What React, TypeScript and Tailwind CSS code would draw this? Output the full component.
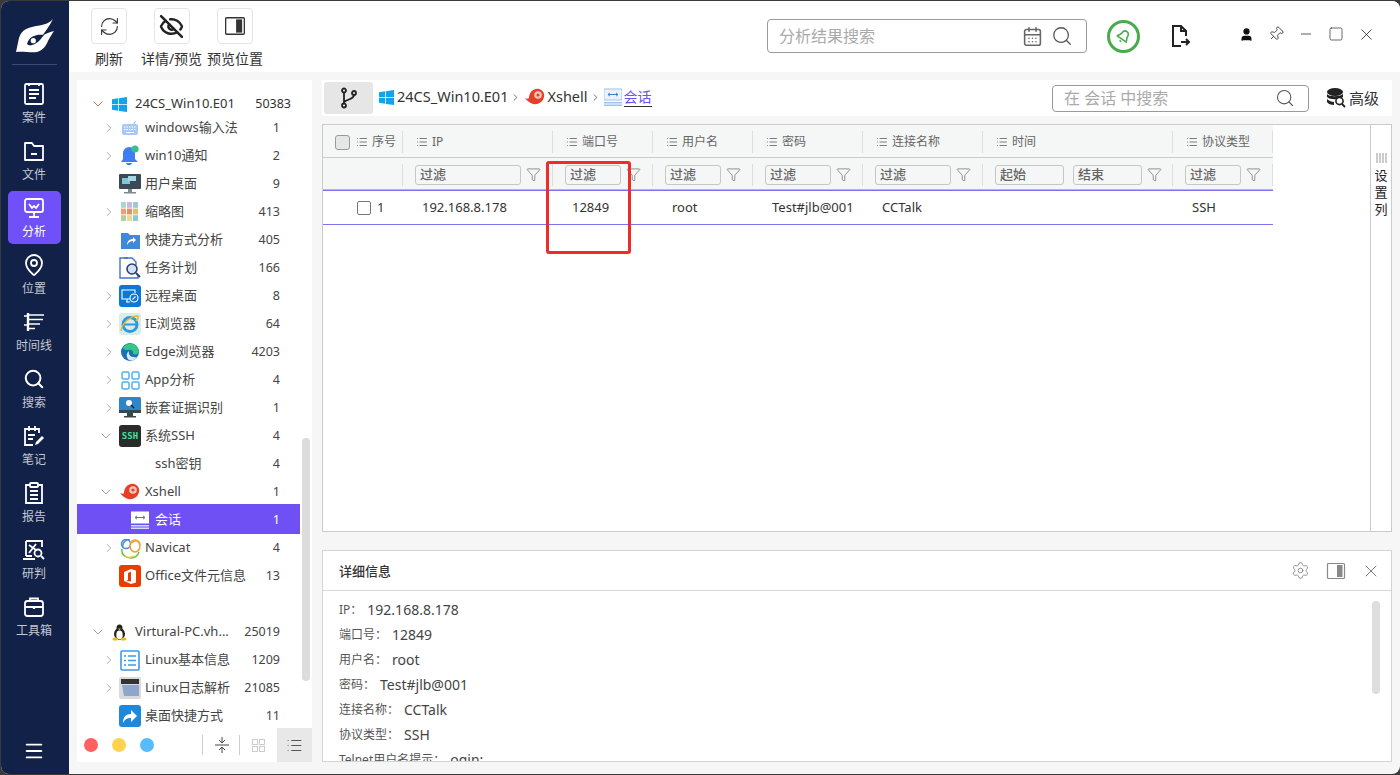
import React from "react";
import { MapPin, Search, Settings, X, Minus, Square, User, Pin, CalendarDays, Filter, RefreshCw, EyeOff, Menu, ChevronRight, ChevronDown, List } from "lucide-react";

const font = "[font-family:'Noto_Sans','Noto_Sans_CJK_SC',sans-serif]";

function Logo() {
  return (
    <svg width="39" height="36" viewBox="0 0 39 36">
      <path d="M38 1 C33 7 25 7 17 9 C9 11 6 14 4 20 L1 34 C8 33 16 35 22 34 C28 32 31 28 33 23 C35 19 37 16 39 13 C34 14 30 16 27 18 C30 14 34 9 38 1 Z" fill="#fff" />
      <path d="M12 26 C14 18 22 16 29 17 C26 21 22 26 17 27 C15 28 13 27 12 26 Z" fill="#122147" />
      <circle cx="18.3" cy="22.7" r="2.6" fill="#fff" />
    </svg>
  );
}

const navStroke = { fill: "none", stroke: "#fff", strokeWidth: 1.8 };

function CaseIcon() {
  return (
    <svg width="22" height="24" viewBox="0 0 22 24" {...navStroke}>
      <rect x="2" y="2" width="18" height="20" rx="1.5" />
      <path d="M6 1v3M16 1v3M6 8h10M6 12h10M6 16h7" />
    </svg>
  );
}
function FolderIcon() {
  return (
    <svg width="24" height="22" viewBox="0 0 24 22" {...navStroke}>
      <path d="M3 3h7l2 3h9v14H3z" strokeLinejoin="round" />
      <path d="M9 14h6" />
    </svg>
  );
}
function TimelineIcon() {
  return (
    <svg width="22" height="18" viewBox="0 0 22 18" fill="none" stroke="#fff" strokeWidth="2">
      <path d="M5 0v18" strokeWidth="2.4" />
      <path d="M1 3h4M1 12h4" strokeWidth="1.4" />
      <path d="M6 2h15M6 6.5h14M6 11h11M6 15.5h6" strokeWidth="1.6" />
    </svg>
  );
}
function AnalysisIcon() {
  return (
    <svg width="22" height="22" viewBox="0 0 22 22" fill="none" stroke="#fff" strokeWidth="1.8">
      <rect x="2" y="2" width="18" height="13" rx="2" />
      <path d="M6 7l3 4 2-2 2 2 3-4M11 15v4M6 20h10" />
    </svg>
  );
}
function NoteIcon() {
  return (
    <svg width="22" height="22" viewBox="0 0 22 22" fill="none" stroke="#fff" strokeWidth="1.8">
      <path d="M16 8V4H2v16h8" />
      <path d="M6 1v5M12 1v5M5 10h7M5 14h5" />
      <path d="M12 20l1-3 6-6 2 2-6 6z" fill="#fff" stroke="none" />
    </svg>
  );
}
function ReportIcon() {
  return (
    <svg width="20" height="24" viewBox="0 0 20 24" {...navStroke}>
      <path d="M6 4H2v18h16V4h-4" />
      <rect x="6" y="2" width="8" height="4" rx="1" />
      <path d="M6 10h8M6 14h8M6 18h8" />
    </svg>
  );
}
function JudgeIcon() {
  return (
    <svg width="22" height="22" viewBox="0 0 22 22" fill="none" stroke="#fff" strokeWidth="1.8">
      <path d="M3 2h16v6M3 2v15M0 20h12M9 17H3" />
      <path d="M6 6l7 5M13 5l-7 9" />
      <circle cx="15" cy="14" r="3.5" />
      <path d="M18 17l3 3" />
    </svg>
  );
}
function ToolboxIcon() {
  return (
    <svg width="22" height="22" viewBox="0 0 22 22" {...navStroke}>
      <rect x="2" y="5" width="18" height="15" rx="2.5" />
      <path d="M7 5V2.5h8V5M2 11h18" />
      <path d="M11 10v3" strokeWidth="2.2" />
    </svg>
  );
}

const navItems = [
  { label: "案件", icon: <CaseIcon /> },
  { label: "文件", icon: <FolderIcon /> },
  { label: "分析", icon: <AnalysisIcon />, active: true },
  { label: "位置", icon: <MapPin size={24} strokeWidth={1.8} color="#fff" /> },
  { label: "时间线", icon: <TimelineIcon /> },
  { label: "搜索", icon: <Search size={22} strokeWidth={2.2} color="#fff" /> },
  { label: "笔记", icon: <NoteIcon /> },
  { label: "报告", icon: <ReportIcon /> },
  { label: "研判", icon: <JudgeIcon /> },
  { label: "工具箱", icon: <ToolboxIcon /> },
];

function WinIcon({ size = 15 }: { size?: number }) {
  return (
    <svg width={size} height={size} viewBox="0 0 16 16" fill="#10a5ea">
      <path d="M0 2.3l6.6-.9v6.2H0zM7.4 1.3L16 0v7.6H7.4zM0 8.4h6.6v6.2L0 13.7zM7.4 8.4H16V16l-8.6-1.2z" />
    </svg>
  );
}
function Snail({ size = 22 }: { size?: number }) {
  return (
    <svg width={size} height={size} viewBox="0 0 22 22" fill="none">
      <path d="M1 12c2 1 3 1 4 0 0-6 5-10 10-9 4 1 6 5 5 8-1 5-6 8-11 7-3-1-6-3-8-6z" fill="#e6402a" />
      <circle cx="14" cy="9" r="4.5" fill="#f6c8b8" stroke="#e6402a" strokeWidth="1.4" />
      <circle cx="14" cy="9" r="1.6" fill="#e6402a" />
    </svg>
  );
}
const Box = ({ children, cls }: { children?: React.ReactNode; cls: string }) => (
  <div className={`flex h-[22px] w-[22px] items-center justify-center ${cls}`}>{children}</div>
);
function ChatScreen({ light }: { light?: boolean }) {
  return (
    <svg width="18" height="18" viewBox="0 0 18 18">
      <rect x="0" y="1" width="18" height="11" fill={light ? "#fff" : "#eaf3fc"} stroke={light ? "#fff" : "#9cc4ea"} />
      <path d="M4 6.5h10M4 6.5l2-1.7M4 6.5l2 1.7M14 6.5l-2-1.7M14 6.5l-2 1.7" stroke="#3d7fc9" fill="none" />
      <rect x="0" y="14" width="18" height="1.5" fill={light ? "#cfe0f5" : "#9cc4ea"} />
      <rect x="0" y="16.5" width="18" height="1.5" fill={light ? "#cfe0f5" : "#9cc4ea"} />
    </svg>
  );
}

const icons: Record<string, React.ReactNode> = {
  kbd: (
    <svg width="18" height="16" viewBox="0 0 18 16">
      <path d="M13 4c0-2 1-2 2-3" stroke="#88b4ea" fill="none" />
      <rect x="1" y="4" width="16" height="11" rx="2" fill="#a9c9f2" />
      <path d="M3 7h12M3 9.5h12" stroke="#fff" strokeDasharray="1.5 1" />
      <path d="M5 12.5h8" stroke="#fff" />
    </svg>
  ),
  bell: (
    <svg width="20" height="22" viewBox="0 0 20 22">
      <path d="M9 2c4 0 6 3 6 7v5l3 3H1l2-3V8c0-3 3-6 6-6z" fill="#3f7df5" />
      <path d="M6 18c1 3 5 3 6 0z" fill="#3f7df5" />
      <circle cx="15" cy="4" r="3.6" fill="#35c08e" />
    </svg>
  ),
  desk: (
    <svg width="22" height="20" viewBox="0 0 22 20">
      <rect x="0" y="0" width="22" height="15" rx="1" fill="#3b4a55" />
      <rect x="3" y="4" width="8" height="6" fill="#7ec7d8" />
      <rect x="9" y="2" width="8" height="5" fill="#a7d5e4" />
      <rect x="9" y="15" width="4" height="3" fill="#7d8a92" />
      <rect x="5" y="18" width="12" height="1.5" fill="#7d8a92" />
    </svg>
  ),
  thumb: (
    <svg width="18" height="20" viewBox="0 0 18 20">
      {["#a8d5d8", "#c8b8e0", "#9cc8d8", "#f0a070", "#e09070", "#e0c070", "#b0d0a0", "#e0e090", "#90c8d8"].map((c, i) => (
        <rect key={i} x={(i % 3) * 6} y={Math.floor(i / 3) * 6.6} width="5" height="5.8" fill={c} />
      ))}
    </svg>
  ),
  shortcut: (
    <svg width="19" height="19" viewBox="0 0 19 19">
      <path d="M0 2h7l2 2h10v14H0z" fill="#3f88dc" />
      <path d="M6 14c0-4 3-6 6-6V6l3 3-3 3v-2c-3 0-4 1-6 4z" fill="#fff" />
    </svg>
  ),
  task: (
    <svg width="22" height="22" viewBox="0 0 22 22" fill="none">
      <path d="M9 1H1v20h18v-3" stroke="#3f78c8" strokeWidth="1.4" />
      <path d="M5 1h8l4 4v3" stroke="#3f78c8" strokeWidth="1.4" />
      <circle cx="13" cy="12" r="5" fill="#cfe2f8" stroke="#2c3e6b" strokeWidth="1.6" />
      <path d="M17 16l4 4" stroke="#2c3e6b" strokeWidth="2" />
    </svg>
  ),
  remote: (
    <Box cls="rounded-[3px] bg-[#0a78d6]">
      <svg width="18" height="16" viewBox="0 0 18 16" fill="none" stroke="#fff" strokeWidth="1.1">
        <path d="M9 11H1V2h13v3M5 14h4M6 11v3" />
        <circle cx="13" cy="10" r="4" />
        <path d="M11.5 11.5l3-3" />
      </svg>
    </Box>
  ),
  ie: (
    <Box cls="rounded-[3px] bg-[#d9ecec]">
      <svg width="20" height="20" viewBox="0 0 20 20" fill="none">
        <circle cx="10" cy="10.5" r="7" stroke="#2a9ade" strokeWidth="3" />
        <path d="M4 10.5h12" stroke="#2a9ade" strokeWidth="2" />
        <path d="M1 17C2 9 10 2 18 2c1 2-1 4-2 5" stroke="#f0b429" strokeWidth="1.4" />
      </svg>
    </Box>
  ),
  edge: (
    <svg width="20" height="20" viewBox="0 0 20 20">
      <circle cx="10" cy="10" r="9" fill="#1b6fb8" />
      <path d="M3 6c3-6 14-6 16 3 0 3-3 4-6 3 1-3-2-5-5-4-2 0-4 0-5-2z" fill="#37c68a" />
      <path d="M9 18c-3-2-3-7 0-9-1 4 2 7 8 6-2 3-5 4-8 3z" fill="#fff" opacity=".85" />
    </svg>
  ),
  app: (
    <svg width="19" height="19" viewBox="0 0 19 19" fill="none" stroke="#4fb2ec" strokeWidth="1.5">
      <rect x="1" y="1" width="7" height="7" rx="1.5" />
      <rect x="11" y="1" width="7" height="7" rx="1.5" />
      <rect x="1" y="11" width="7" height="7" rx="1.5" />
      <rect x="11" y="11" width="7" height="7" rx="1.5" />
    </svg>
  ),
  nest: (
    <svg width="22" height="22" viewBox="0 0 22 22">
      <rect x="0" y="0" width="22" height="16" rx="1.5" fill="#2d86c9" />
      <rect x="0" y="13" width="22" height="3" fill="#37474f" />
      <circle cx="10" cy="6" r="3" fill="#fff" />
      <path d="M12 8l3 3" stroke="#222" strokeWidth="1.6" />
      <rect x="8" y="16" width="6" height="3" fill="#37474f" />
      <rect x="5" y="19" width="12" height="1.5" fill="#37474f" />
    </svg>
  ),
  ssh: (
    <Box cls="rounded-[3px] bg-[#2b2b2b]">
      <span className="text-[9px] font-bold leading-none text-[#3fe0a0] [font-family:'DejaVu_Sans_Mono',monospace]">SSH</span>
    </Box>
  ),
  snail: <Snail />,
  chat: <ChatScreen light />,
  navicat: (
    <svg width="21" height="21" viewBox="0 0 21 21" fill="none" strokeWidth="1.5">
      <path d="M10 2C5 1 2 5 3 10" stroke="#4a90e2" />
      <circle cx="6" cy="6" r="4.5" stroke="#4a90e2" />
      <path d="M12 5c3-4 8-2 8 2" stroke="#f0a030" />
      <ellipse cx="15" cy="8" rx="5" ry="6" stroke="#f0a030" />
      <path d="M2 11c-1 6 4 9 9 9s7-3 8-6" stroke="#6cc04a" />
      <path d="M5 18c3 2 6 2 9 0" stroke="#e8c830" />
    </svg>
  ),
  office: (
    <Box cls="rounded-[3px] bg-[#eb3c00]">
      <svg width="14" height="15" viewBox="0 0 14 15" fill="#fff">
        <path d="M8 0L1 3v9l7 3 5-1.5V1.5zM8 2.5v10L3 12l2-1V4z" />
      </svg>
    </Box>
  ),
  tux: (
    <svg width="15" height="17" viewBox="0 0 15 17">
      <ellipse cx="7.5" cy="10" rx="5.5" ry="6" fill="#222" />
      <ellipse cx="7.5" cy="4" rx="3" ry="3.6" fill="#222" />
      <ellipse cx="7.5" cy="11" rx="3.2" ry="4.4" fill="#fff" />
      <path d="M6 4.5h3L7.5 6.2z" fill="#f0b429" />
      <ellipse cx="3.5" cy="15" rx="3" ry="1.6" fill="#f0b429" />
      <ellipse cx="11.5" cy="15" rx="3" ry="1.6" fill="#f0b429" />
    </svg>
  ),
  linux: (
    <svg width="20" height="21" viewBox="0 0 20 21" fill="none">
      <rect x="1" y="1" width="18" height="19" rx="1" stroke="#3d9ae6" strokeWidth="1.6" />
      <path d="M8 6h8M8 10.5h8M8 15h8" stroke="#3d9ae6" strokeWidth="1.4" />
      <path d="M4 6h2M4 10.5h2M4 15h2" stroke="#3d9ae6" strokeWidth="1.4" />
    </svg>
  ),
  log: (
    <svg width="22" height="22" viewBox="0 0 22 22">
      <rect x="0" y="0" width="22" height="22" rx="2" fill="#dadada" />
      <rect x="2" y="2" width="18" height="5" fill="#333" />
      <path d="M3 8h17v11H5z" fill="#8ea6cc" />
    </svg>
  ),
  share: (
    <Box cls="rounded-[3px] bg-[#1e88dc]">
      <svg width="16" height="15" viewBox="0 0 16 15" fill="#fff">
        <path d="M1 14C1 8 4 5 9 5V1l6 6-6 6V9c-4 0-6 1-8 5z" />
      </svg>
    </Box>
  ),
};

type Row = { t: string; n: string; icon?: string; arrow?: "r" | "d"; lvl?: number; sel?: boolean };
const rows: Row[] = [
  { t: "windows输入法", n: "1", icon: "kbd", arrow: "r" },
  { t: "win10通知", n: "2", icon: "bell", arrow: "r" },
  { t: "用户桌面", n: "9", icon: "desk" },
  { t: "缩略图", n: "413", icon: "thumb", arrow: "r" },
  { t: "快捷方式分析", n: "405", icon: "shortcut" },
  { t: "任务计划", n: "166", icon: "task" },
  { t: "远程桌面", n: "8", icon: "remote", arrow: "r" },
  { t: "IE浏览器", n: "64", icon: "ie", arrow: "r" },
  { t: "Edge浏览器", n: "4203", icon: "edge", arrow: "r" },
  { t: "App分析", n: "4", icon: "app", arrow: "r" },
  { t: "嵌套证据识别", n: "1", icon: "nest", arrow: "r" },
  { t: "系统SSH", n: "4", icon: "ssh", arrow: "d" },
  { t: "ssh密钥", n: "4", lvl: 2 },
  { t: "Xshell", n: "1", icon: "snail", arrow: "d" },
  { t: "会话", n: "1", icon: "chat", lvl: 2, sel: true },
  { t: "Navicat", n: "4", icon: "navicat", arrow: "r" },
  { t: "Office文件元信息", n: "13", icon: "office" },
];
const rows2: Row[] = [
  { t: "Linux基本信息", n: "1209", icon: "linux", arrow: "r" },
  { t: "Linux日志解析", n: "21085", icon: "log", arrow: "r" },
  { t: "桌面快捷方式", n: "11", icon: "share" },
];

function TreeRow({ r }: { r: Row }) {
  return (
    <div className={`flex w-[223px] items-center pr-5 pt-[2px] text-[13px] ${r.sel ? "relative -my-px h-[30px] bg-[#6e50f5] text-white" : "h-7 text-[#444]"}`}>
      {r.lvl === 2 ? (
        <>
          <div className="ml-[54px] flex w-[24px] shrink-0 items-center">{r.icon ? icons[r.icon] : null}</div>
          <span className="flex-1 truncate">{r.t}</span>
        </>
      ) : (
        <>
          <div className="ml-[25px] flex w-[17px] shrink-0 items-center">
            {r.arrow === "r" && <ChevronRight size={14} strokeWidth={1.2} color="#888" />}
            {r.arrow === "d" && <ChevronDown size={16} strokeWidth={1.2} color="#888" className="-ml-1" />}
          </div>
          <div className="flex w-[26px] shrink-0 items-center justify-center pr-[4px]">{r.icon ? icons[r.icon] : null}</div>
          <span className="flex-1 truncate">{r.t}</span>
        </>
      )}
      <span className="text-[12.5px]">{r.n}</span>
    </div>
  );
}

function Sidebar() {
  return (
    <aside className="flex w-[68px] shrink-0 flex-col items-center bg-[#122147] pr-[2px]">
      <div className="mt-[17px] flex h-[36px] items-center justify-center">
        <Logo />
      </div>
      <div className="mt-[10px] h-px w-[45px] bg-[#3c4a78]" />
      <nav className="mt-3 flex w-full flex-col items-center gap-1">
        {navItems.map((n) => (
          <div key={n.label} className={`flex h-[53px] w-[53px] flex-col items-center justify-center gap-[3px] rounded-[5px] ${n.active ? "bg-[#7050f8]" : ""}`}>
            <div className="flex h-[26px] items-center">{n.icon}</div>
            <span className={`text-[12px] leading-[16px] ${n.active ? "text-white" : "text-[#c4c8d2]"}`}>{n.label}</span>
          </div>
        ))}
      </nav>
      <div className="mt-auto mb-[12px]">
        <Menu size={22} strokeWidth={2} color="#fff" />
      </div>
    </aside>
  );
}

function PanelIcon({ size = 22, c = "#333" }: { size?: number; c?: string }) {
  return (
    <svg width={size} height={size} viewBox="0 0 20 20" fill="none">
      <rect x="1.5" y="2.5" width="17" height="15" rx="1" stroke={c} strokeWidth="1.2" />
      <rect x="11" y="4" width="5.5" height="12" fill={c} />
    </svg>
  );
}

function Toolbar() {
  const btns = [
    { l: "刷新", w: "w-[62px]", ic: <RefreshCw size={21} strokeWidth={1.3} color="#333" /> },
    { l: "详情/预览", w: "w-[63px]", ic: <EyeOff size={25} strokeWidth={2.4} color="#222" /> },
    { l: "预览位置", w: "w-[64px]", ic: <PanelIcon /> },
  ];
  return (
    <header className="flex h-[71px] shrink-0 items-start bg-white pl-[9px] text-[#333]">
      <div className="flex pt-[7px]">
        {btns.map((b) => (
          <div key={b.l} className={`flex ${b.w} flex-col items-center`}>
            <div className="flex h-[36px] w-[36px] items-center justify-center rounded-[4px] border border-[#e4e4e4]">{b.ic}</div>
            <span className="mt-[6px] whitespace-nowrap text-[14px] leading-[18px]">{b.l}</span>
          </div>
        ))}
      </div>
      <div className="ml-auto flex items-center pt-[18px]">
        <div className="flex h-[34px] w-[320px] items-center rounded-[4px] border border-[#999] pl-[11px] pr-[13px]">
          <span className="flex-1 text-[16px] text-[#aaa]">分析结果搜索</span>
          <CalendarDays size={21} strokeWidth={1.8} color="#666" />
          <Search size={22} strokeWidth={1.4} color="#555" className="ml-[8px]" />
        </div>
        <div className="ml-[20px] flex h-[33px] w-[33px] items-center justify-center rounded-full border-[3px] border-[#46ac4c]">
          <svg width="17" height="17" viewBox="0 0 17 17" fill="none" stroke="#46ac4c" strokeWidth="1.6" strokeLinejoin="round">
            <g transform="rotate(35 8.5 8.5)">
              <path d="M8.5 2.5C5.7 2.5 5 5 5 7.5L3 11.5h11L12 7.5C12 5 11.3 2.5 8.5 2.5Z" />
              <path d="M7.5 14h2" />
            </g>
          </svg>
        </div>
        <svg width="22" height="26" viewBox="0 0 22 26" fill="none" stroke="#222" strokeWidth="2" className="ml-[30px]">
          <path d="M11 23H3V3h8l5 5v5M11 3v5h5" />
          <path d="M11 19h8M16 16l3 3-3 3" />
        </svg>
        <div className="ml-[39px] mr-[19px] flex -translate-y-[2px] items-center">
          <span className="flex w-[30px] justify-center"><User size={15} fill="#111" color="#111" /></span>
          <span className="flex w-[30px] justify-center"><Pin size={16} strokeWidth={1.3} color="#333" className="rotate-45" /></span>
          <span className="flex w-[30px] justify-center"><Minus size={16} strokeWidth={1.2} color="#333" /></span>
          <span className="flex w-[30px] justify-center"><Square size={16} strokeWidth={1.1} color="#333" /></span>
          <span className="flex w-[30px] justify-center"><X size={19} strokeWidth={1.1} color="#333" /></span>
        </div>
      </div>
    </header>
  );
}

function TreePanel() {
  return (
    <section className="relative flex w-[235px] shrink-0 flex-col overflow-hidden bg-white">
      <div className="h-0 flex-1 overflow-hidden pt-[13px]">
        <div className="flex h-[20px] items-center pr-[21px] pt-[2px] text-[13px] text-[#333]">
          <ChevronDown size={16} strokeWidth={1.2} color="#b0563a" className="ml-[13px]" />
          <div className="ml-[6px] w-[23px]"><WinIcon /></div>
          <span className="flex-1 truncate">24CS_Win10.E01</span>
          <span className="text-[12.5px]">50383</span>
        </div>
        {rows.map((r) => (
          <TreeRow key={r.t} r={r} />
        ))}
        <div className="h-7" />
        <div className="flex h-7 w-[223px] items-center pr-5 pt-[2px] text-[13px] text-[#444]">
          <ChevronDown size={16} strokeWidth={1.2} color="#888" className="ml-[13px]" />
          <div className="ml-[6px] w-[23px]">{icons.tux}</div>
          <span className="flex-1 truncate">Virtural-PC.vh...</span>
          <span className="ml-[14px] text-[12.5px]">25019</span>
        </div>
        {rows2.map((r) => (
          <TreeRow key={r.t} r={r} />
        ))}
      </div>
      <div className="flex h-[34px] shrink-0 items-center bg-white pl-[7px]">
        <span className="h-[14px] w-[14px] rounded-full bg-[#ff6060]" />
        <span className="ml-[14px] h-[14px] w-[14px] rounded-full bg-[#ffd24f]" />
        <span className="ml-[14px] h-[14px] w-[14px] rounded-full bg-[#55bcff]" />
        <span className="ml-[48px] h-[20px] w-px bg-[#ccc]" />
        <svg width="14" height="18" viewBox="0 0 14 18" fill="none" stroke="#444" className="ml-[12px]">
          <path d="M0 9h14M7 1v5M4 4l3 3 3-3M7 17v-5M4 14l3-3 3 3" />
        </svg>
        <span className="ml-[10px] h-[20px] w-px bg-[#ccc]" />
        <svg width="13" height="13" viewBox="0 0 13 13" fill="none" stroke="#ccc" className="ml-[12px]">
          <rect x=".5" y=".5" width="5" height="5" />
          <rect x="7.5" y=".5" width="5" height="5" />
          <rect x=".5" y="7.5" width="5" height="5" />
          <rect x="7.5" y="7.5" width="5" height="5" />
        </svg>
        <div className="ml-[12px] flex h-full w-[35px] items-center justify-center bg-[#e8e8e8]">
          <List size={17} strokeWidth={1.6} color="#555" />
        </div>
      </div>
      <div className="absolute left-[225px] top-[358px] h-[243px] w-[8px] rounded bg-[#dcdcdc]" />
    </section>
  );
}

const cols = [
  { t: "序号", w: "w-[80px]" },
  { t: "IP", w: "w-[150px]", f: ["w-[106px]"] },
  { t: "端口号", w: "w-[100px]", f: ["w-[56px]"] },
  { t: "用户名", w: "w-[100px]", f: ["w-[56px]"] },
  { t: "密码", w: "w-[110px]", f: ["w-[66px]"] },
  { t: "连接名称", w: "w-[120px]", f: ["w-[76px]"] },
  { t: "时间", w: "w-[190px]", f: ["w-[69px]", "w-[69px]"] },
  { t: "协议类型", w: "w-[100px]", f: ["w-[56px]"] },
];

const Sep = () => <span className="h-[22px] w-px shrink-0 bg-[#dcdfe0]" />;
const ListGlyph = () => <List size={12} strokeWidth={1.7} color="#666" className="shrink-0" />;

function FilterBox({ w, label }: { w: string; label: string }) {
  return (
    <div className={`flex h-[20px] ${w} items-center rounded-[3px] border border-[#c4c7c7] pl-[4px] text-[13px] font-medium text-[#666]`}>{label}</div>
  );
}

function DataTable() {
  const vals = ["192.168.8.178", "12849", "root", "Test#jlb@001", "CCTalk", "", "SSH"];
  const cells = [
    "w-[150px] pl-[19px]",
    "w-[100px] pl-[19px]",
    "w-[100px] pl-[19px]",
    "w-[110px] pl-[19px]",
    "w-[120px] pl-[19px]",
    "w-[190px] pl-[19px]",
    "w-[100px] pl-[19px]",
  ];
  return (
    <div className="flex h-[408px] border border-[#c8cccc] bg-white">
      <div className="relative flex-1">
        <div className="w-[950px] border-b border-[#7b74ef] bg-[#f5f6f6]">
          <div className="flex h-[33px] items-center border-b border-[#c9cccc] pt-[2px] text-[12px] text-[#666]">
            {cols.map((c, i) =>
              i === 0 ? (
                <div key={c.t} className="flex w-[80px] items-center justify-end">
                  <span className="mr-[6px] h-[15px] w-[15px] rounded-[3px] border border-[#999] bg-[#e6e6e6]" />
                  <ListGlyph />
                  <span className="ml-[4px] mr-[6px]">{c.t}</span>
                  <Sep />
                </div>
              ) : (
                <div key={c.t} className={`flex ${c.w} items-center`}>
                  <span className="ml-[13px] flex flex-1 items-center gap-[4px]"><ListGlyph />{c.t}</span>
                  <Sep />
                </div>
              )
            )}
          </div>
          <div className="flex h-[32px] items-center border-b border-[#b8bcbc] pt-[2px]">
            {cols.map((c, i) =>
              i === 0 ? (
                <div key={c.t} className="flex w-[80px] justify-end"><Sep /></div>
              ) : (
                <div key={c.t} className={`flex ${c.w} items-center`}>
                  <div className="ml-[12px] flex flex-1 items-center gap-[9px]">
                    {c.f!.map((w, j) => (
                      <FilterBox key={j} w={w} label={c.t === "时间" ? (j === 0 ? "起始" : "结束") : "过滤"} />
                    ))}
                    <Filter size={15} strokeWidth={1.1} color="#666" className="-ml-[4px]" />
                  </div>
                  <Sep />
                </div>
              )
            )}
          </div>
        </div>
        <div className="flex h-[34px] w-[950px] items-center border-b border-[#7b74ef] pt-px text-[13px] text-[#333]">
          <div className="flex w-[80px] items-center pl-[34px]">
            <span className="mr-[6px] h-[14px] w-[14px] rounded-[2px] border border-[#777]" />
            <span>1</span>
          </div>
          {vals.map((v, i) => (
            <div key={i} className={cells[i]}>{v}</div>
          ))}
        </div>
        <div className="absolute left-[223px] top-[36px] h-[93px] w-[85px] rounded-[3px] border-[3px] border-[#f02b2b]" />
      </div>
      <div className="flex w-[21px] shrink-0 flex-col items-center border-l border-[#c8cccc] pt-[28px] text-[13px] leading-[17px] text-[#222]">
        <svg width="11" height="10" viewBox="0 0 11 10" stroke="#999" className="mb-[4px]">
          <path d="M1 0v10M4 0v10M7 0v10M10 0v10" />
        </svg>
        <span>设</span>
        <span>置</span>
        <span>列</span>
      </div>
    </div>
  );
}

function Details() {
  const items = [
    ["IP：", "192.168.8.178"],
    ["端口号：", "12849"],
    ["用户名：", "root"],
    ["密码：", "Test#jlb@001"],
    ["连接名称：", "CCTalk"],
    ["协议类型：", "SSH"],
    ["Telnet用户名提示：", "ogin:"],
  ];
  return (
    <div className="relative mt-[18px] flex h-0 flex-1 flex-col border border-[#d4d4d4] bg-white">
      <div className="flex h-[40px] shrink-0 items-center border-b border-[#d8d8d8] pl-[16px] pr-[10px]">
        <span className="flex-1 pt-[2px] text-[13px] font-medium text-[#333]">详细信息</span>
        <Settings size={19} strokeWidth={1} color="#777" />
        <span className="ml-[16px]"><PanelIcon size={20} c="#888" /></span>
        <X size={20} strokeWidth={1} color="#666" className="ml-[15px]" />
      </div>
      <div className="flex-1 overflow-hidden pl-[16px] pt-[6px]">
        {items.map(([k, v]) => (
          <div key={k} className="flex h-[25px] items-center whitespace-nowrap">
            <span className="text-[12px] text-[#555]">{k}</span>
            <span className="ml-[5px] text-[14px] text-[#444]">{v}</span>
          </div>
        ))}
      </div>
      <div className="absolute right-[11px] top-[50px] h-[93px] w-[8px] rounded bg-[#dedede]" />
    </div>
  );
}

function MainPanel() {
  return (
    <section className="ml-[10px] flex w-[1070px] shrink-0 flex-col">
      <div className="flex h-[36px] shrink-0 items-center bg-white pl-[2px] pr-[13px] text-[14.5px] text-[#333]">
        <div className="flex h-[32px] w-[49px] items-center justify-center rounded-[3px] bg-[#e6e6e6]">
          <svg width="20" height="22" viewBox="0 0 20 22" fill="none" stroke="#222" strokeWidth="1.8">
            <circle cx="5" cy="3.5" r="2" />
            <circle cx="5" cy="18.5" r="2" />
            <circle cx="15" cy="6" r="2" />
            <path d="M5 5.5v11M15 8c0 4-6 4-10 7" />
          </svg>
        </div>
        <div className="flex -translate-y-px items-center">
          <span className="ml-[6px]"><WinIcon size={15} /></span>
          <span className="ml-[3px]">24CS_Win10.E01</span>
          <ChevronRight size={11} strokeWidth={1.5} color="#333" className="ml-[2px]" />
          <span className="ml-[3px]"><Snail size={22} /></span>
          <span className="ml-px">Xshell</span>
          <ChevronRight size={11} strokeWidth={1.5} color="#333" className="ml-[2px]" />
          <span className="ml-[3px]"><ChatScreen /></span>
          <span className="ml-[2px] border-b border-[#333] text-[14px] leading-[18px] text-[#6e50f5]">会话</span>
        </div>
        <div className="ml-auto flex h-[27px] w-[257px] items-center rounded-[4px] border border-[#999] pl-[11px] pr-[13px]">
          <span className="flex-1 text-[16px] text-[#aaa]">在 会话 中搜索</span>
          <Search size={20} strokeWidth={1.3} color="#555" />
        </div>
        <svg width="20" height="22" viewBox="0 0 20 22" className="ml-[17px]">
          <ellipse cx="9" cy="5" rx="8" ry="4" fill="#222" />
          <path d="M1 7c2 3 13 3 16 0v3c-4 3-13 3-16 0zM1 12c2 2 5 3 7 3v3c-3 0-6-1-7-3z" fill="#222" />
          <circle cx="13.5" cy="14" r="3.6" fill="#fff" stroke="#222" strokeWidth="1.6" />
          <path d="M16 17l3 3" stroke="#222" strokeWidth="1.8" />
        </svg>
        <span className="ml-[3px] text-[15px]">高级</span>
      </div>
      <div className="mt-[8px] shrink-0"><DataTable /></div>
      <Details />
    </section>
  );
}

export default function App() {
  return (
    <div className={`h-[775px] w-[1400px] overflow-hidden bg-[#3a3a3a] pb-px pl-px pt-px ${font}`}>
      <div className="flex h-full w-full overflow-hidden rounded-[8px] bg-[#f6f6f6]">
        <Sidebar />
        <div className="flex min-w-0 flex-1 flex-col">
          <Toolbar />
          <div className="flex h-0 flex-1 pb-[12px] pl-[8px] pt-[8px]">
            <TreePanel />
            <MainPanel />
          </div>
        </div>
      </div>
    </div>
  );
}
